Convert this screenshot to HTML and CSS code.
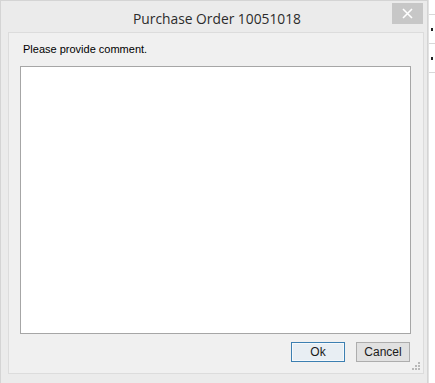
FILE: index.html
```html
<!DOCTYPE html>
<html lang="en">
<head>
    <meta charset="UTF-8">
    <title>Purchase Order 10051018</title>
    <link rel="stylesheet" href="styles.css">
</head>
<body>
    <div class="screen">
        <div class="window">
            <div class="titlebar">
                <span class="title">Purchase Order 10051018</span>
                <button class="close" aria-label="Close">
                    <svg width="11" height="11" viewBox="0 0 11 11">
                        <path d="M1 1 L10 10 M10 1 L1 10" stroke="#fff" stroke-width="1.6"/>
                    </svg>
                </button>
            </div>
            <div class="client">
                <label class="prompt" for="comment">Please provide comment.</label>
                <textarea id="comment" class="comment"></textarea>
                <div class="buttons">
                    <button class="btn default">Ok</button>
                    <button class="btn">Cancel</button>
                </div>
                <svg class="grip" width="9" height="9" viewBox="0 0 9 9">
                    <rect x="6" y="0" width="2" height="2" fill="#b8b8b8"/>
                    <rect x="3" y="3" width="2" height="2" fill="#b8b8b8"/>
                    <rect x="6" y="3" width="2" height="2" fill="#b8b8b8"/>
                    <rect x="0" y="6" width="2" height="2" fill="#b8b8b8"/>
                    <rect x="3" y="6" width="2" height="2" fill="#b8b8b8"/>
                    <rect x="6" y="6" width="2" height="2" fill="#b8b8b8"/>
                </svg>
            </div>
        </div>
        <div class="behind">
            <div class="row"><span class="dot"></span></div>
            <div class="row"><span class="dot"></span></div>
            <div class="row"></div>
        </div>
    </div>
</body>
</html>
```

FILE: styles.css
```css
body {
    margin: 0;
    background: #ffffff;
    font-family: "Liberation Sans", Arial, sans-serif;
}

.screen {
    display: flex;
    width: 435px;
    height: 383px;
    overflow: hidden;
}

.window {
    width: 428px;
    height: 383px;
    box-sizing: border-box;
    background: #ebebeb;
    border: 1px solid #d4d4d4;
    border-bottom: none;
    padding: 0 3px 0 7px;
    display: flex;
    flex-direction: column;
    flex-shrink: 0;
}

.titlebar {
    position: relative;
    height: 31px;
    display: flex;
    align-items: center;
    justify-content: center;
}

.title {
    font-family: "Open Sans", "Noto Sans", sans-serif;
    font-size: 13.8px;
    color: #2b2b2b;
    margin-top: 3px;
    margin-left: 2px;
}

.close {
    position: absolute;
    top: 2px;
    right: 1px;
    width: 31px;
    height: 21px;
    border: none;
    padding: 0;
    background: #c7c7c7;
    display: flex;
    align-items: center;
    justify-content: center;
}

.client {
    position: relative;
    height: 342px;
    box-sizing: border-box;
    background: #f0f0f0;
    border: 1px solid #dcdcdc;
    padding: 10px 12px 0 11px;
    display: flex;
    flex-direction: column;
}

.prompt {
    font-size: 11px;
    color: #000;
    margin-left: 3px;
    height: 23px;
}

.comment {
    width: 391px;
    height: 268px;
    box-sizing: border-box;
    border: 1px solid #a6a6a6;
    background: #fff;
    resize: none;
    margin: 0;
}

.buttons {
    display: flex;
    justify-content: flex-end;
    gap: 11px;
    margin-top: 8px;
    padding-right: 1px;
}

.btn {
    font-family: "Liberation Sans", Arial, sans-serif;
    font-size: 12px;
    color: #1a1a1a;
    height: 20px;
    width: 54px;
    padding: 0;
    border: 1px solid #adadad;
    background: #e1e1e1;
}

.btn.default {
    border-color: #3c7fb1;
    background: #e8eef3;
    box-shadow: inset 0 0 0 1px #f5f9fc;
}

.grip {
    position: absolute;
    right: 2px;
    bottom: 2px;
}

.behind {
    flex: 1;
    border-left: 1px solid #e2e2e2;
    padding-top: 14px;
}

.row {
    height: 28px;
    border-top: 1px solid #d8d8d8;
    position: relative;
}

.dot {
    position: absolute;
    left: 2px;
    top: 13px;
    width: 2px;
    height: 3px;
    background: #222;
}
```
